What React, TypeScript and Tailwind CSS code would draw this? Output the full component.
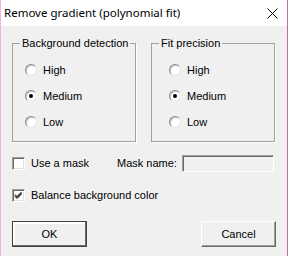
const font = { fontFamily: '"Liberation Sans", Arial, sans-serif' };

function Radio({ checked }: { checked?: boolean }) {
  return (
    <div className="w-[12px] h-[12px] shrink-0 rounded-full bg-white border border-t-[#8a8a8a] border-l-[#8a8a8a] border-r-[#e6e6e6] border-b-[#e6e6e6] shadow-[inset_1px_1px_0_#c8c8c8] flex items-center justify-center">
      {checked && <div className="w-[4px] h-[4px] rounded-full bg-black" />}
    </div>
  );
}

function Checkbox({ checked }: { checked?: boolean }) {
  return (
    <div className="w-[13px] h-[13px] shrink-0 bg-white border border-t-[#a0a0a0] border-l-[#a0a0a0] border-r-white border-b-white shadow-[inset_1px_1px_0_#696969,inset_-1px_-1px_0_#e3e3e3] flex items-center justify-center">
      {checked && (
        <svg width="9" height="9" viewBox="0 0 9 9">
          <path d="M1 3.5 L3 5.5 L7.5 1 M1 4.5 L3 6.5 L7.5 2 M1 5.5 L3 7.5 L7.5 3" fill="none" stroke="#000" strokeWidth="1" />
        </svg>
      )}
    </div>
  );
}

function Group({ title, pl }: { title: string; pl: string }) {
  return (
    <fieldset className="w-[124px] min-w-0 border border-[#a0a0a0] pb-[6px] shadow-[1px_1px_0_#fff]">
      <legend className="ml-[7px] px-[2px] leading-[13px] text-[11px] whitespace-nowrap">{title}</legend>
      <div className={`pt-[7px] ${pl} flex flex-col`}>
        {['High', 'Medium', 'Low'].map((l) => (
          <div key={l} className="h-[26px] flex items-center gap-[6px] text-[11px]">
            <Radio checked={l === 'Medium'} />
            <span>{l}</span>
          </div>
        ))}
      </div>
    </fieldset>
  );
}

export default function App() {
  return (
    <div style={font} className="w-[288px] h-[256px] flex flex-col border-l border-r border-l-[#eeb6e6] border-r-[#c46aa8] text-black">
      <div className="h-[26px] bg-white flex items-center justify-between pl-[3px] pr-[9px]">
        <span className="text-[11.5px]" style={{ fontFamily: '"Noto Sans", sans-serif' }}>Remove gradient (polynomial fit)</span>
        <svg width="11" height="11" viewBox="0 0 11 11">
          <path d="M0.5 0.5 L10.5 10.5 M10.5 0.5 L0.5 10.5" stroke="#000" strokeWidth="1" />
        </svg>
      </div>
      <div className="flex-1 bg-[#f0f0f0] px-[11px] pt-[11px] flex flex-col">
        <div className="flex gap-[15px]">
          <Group title="Background detection" pl="pl-[12px]" />
          <Group title="Fit precision" pl="pl-[17px]" />
        </div>
        <div className="mt-[13px] h-[17px] flex items-center text-[11px]">
          <Checkbox />
          <span className="ml-[6px] w-[86px]">Use a mask</span>
          <span>Mask name:</span>
          <div className="ml-auto mr-[2px] w-[92px] h-[17px] border border-t-[#a0a0a0] border-l-[#a0a0a0] border-r-white border-b-white shadow-[inset_1px_1px_0_#696969]" />
        </div>
        <div className="mt-[17px] h-[13px] flex items-center text-[11px]">
          <Checkbox checked />
          <span className="ml-[6px]">Balance background color</span>
        </div>
        <div className="mt-[19px] flex justify-between text-[11px]">
          <button className="w-[75px] h-[26px] bg-[#f0f0f0] border border-[#404040] shadow-[inset_-1px_-1px_0_#696969,inset_2px_2px_0_#fff]">OK</button>
          <button className="w-[75px] h-[26px] bg-[#f0f0f0] border border-t-white border-l-white border-r-[#696969] border-b-[#696969] shadow-[inset_-1px_-1px_0_#a0a0a0]">Cancel</button>
        </div>
      </div>
    </div>
  );
}
